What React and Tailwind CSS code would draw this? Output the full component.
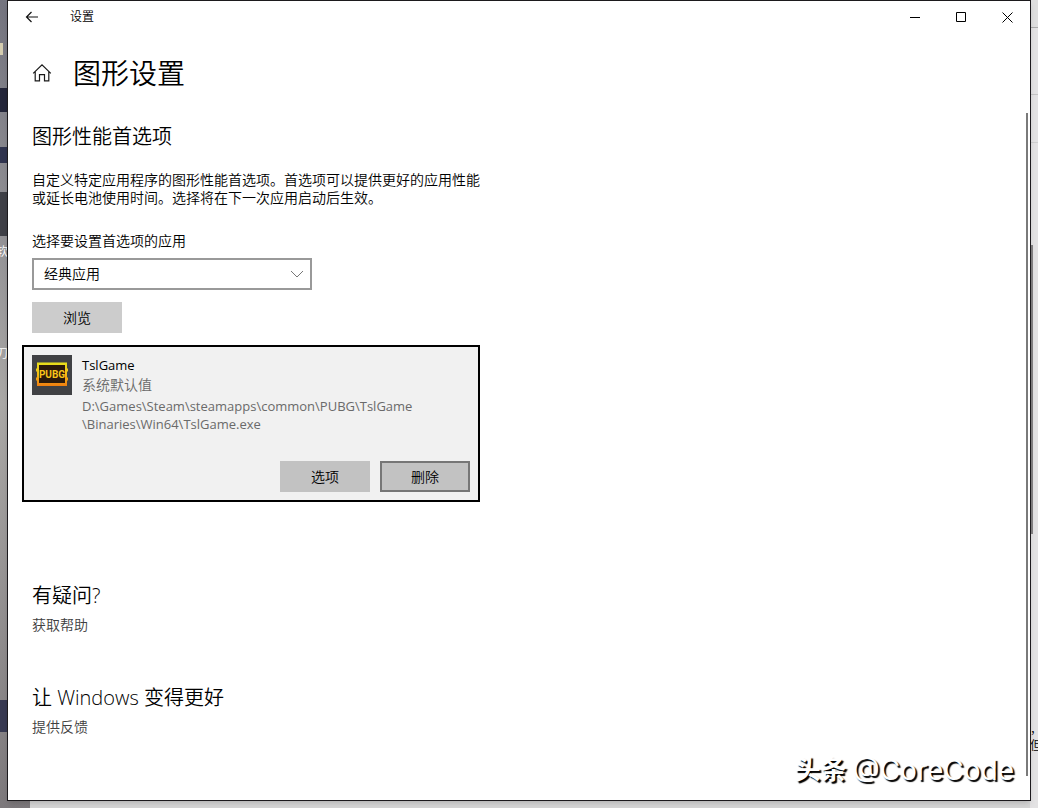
import React, { useState } from 'react';

const BackIcon = () => (
  <svg className="h-3 w-3.5" viewBox="0 0 14 12" fill="none" stroke="#111" strokeWidth="1.2" aria-hidden="true">
    <path d="M13 6H1.5M6.5 1l-5 5 5 5" />
  </svg>
);

const HomeIcon = () => (
  <svg className="h-[18px] w-5" viewBox="0 0 20 18" fill="none" stroke="#1a1a1a" strokeWidth="1.2" aria-hidden="true">
    <path d="M1.2 9.4L10 .9l8.800 8.500M3.200 7.800v9.100h4.300v-6.200h5v6.200h4.300V7.800" />
  </svg>
);

const ChevronIcon = () => (
  <svg className="h-2 w-3.5" viewBox="0 0 14 8" fill="none" stroke="#777" strokeWidth="1" aria-hidden="true">
    <path d="M1 1l6 6 6-6" />
  </svg>
);

const GameLogo = () => (
  <svg className="h-10 w-10 shrink-0" viewBox="0 0 40 40" role="img" aria-label="PUBG">
    <defs>
      <linearGradient id="gold" x1="0" y1="0" x2="0" y2="1">
        <stop offset="0" stopColor="#e8e01c" />
        <stop offset="0.5" stopColor="#f5bd16" />
        <stop offset="1" stopColor="#ef7d10" />
      </linearGradient>
    </defs>
    <rect width="40" height="40" fill="#404144" />
    <path d="M5 7.500h30v6h1v3h-1v6h1v3h-1v5.500H5v-5.500H4v-3h1v-6H4v-3h1z" fill="url(#gold)" />
    <path d="M7 10h26v18H7z" fill="#2b1a0c" />
    <text
      x="20"
      y="22.500"
      textAnchor="middle"
      fill="#f7c51a"
      className="font-['Roboto',sans-serif] text-[10px] font-bold"
    >
      PUBG
    </text>
  </svg>
);

const WindowButton = ({ label, children }) => (
  <button aria-label={label} className="flex h-8 w-[46px] items-center justify-center hover:bg-gray-200">
    <svg className="h-[11px] w-[11px]" viewBox="0 0 11 11" fill="none" stroke="#000" strokeWidth="1" aria-hidden="true">
      {children}
    </svg>
  </button>
);

const TitleBar = () => (
  <header className="flex h-8 items-center">
    <button aria-label="返回" className="flex h-8 w-12 items-center justify-center hover:bg-gray-200">
      <BackIcon />
    </button>
    <span className="ml-3.5 text-xs">设置</span>
    <div className="ml-auto flex">
      <WindowButton label="最小化">
        <path d="M0 5.500h10" />
      </WindowButton>
      <WindowButton label="最大化">
        <path d="M.5.5h9v9h-9z" />
      </WindowButton>
      <WindowButton label="关闭">
        <path d="M.5.5l10 10M10.500.5l-10 10" />
      </WindowButton>
    </div>
  </header>
);

const AppCard = ({ name, preference, path }) => (
  <article className="mt-3 border-2 border-black bg-[#f1f1f1] p-2">
    <div className="flex gap-2.5">
      <GameLogo />
      <div>
        <h3 className="text-[13px] leading-5 font-normal">{name}</h3>
        <p className="leading-5 text-[#6a6a6a]">{preference}</p>
        <p className="mt-0.5 text-[13px] leading-[18px] font-normal text-[#6a6a6a]">
          {path.map((part) => (
            <span key={part} className="block">{part}</span>
          ))}
        </p>
      </div>
    </div>
    <div className="mt-7 flex justify-end gap-2.5">
      <button className="h-[31px] w-[90px] bg-[#c2c2c2]">选项</button>
      <button className="h-[31px] w-[90px] border-2 border-[#767676] bg-[#c2c2c2]">删除</button>
    </div>
  </article>
);

const HelpSection = ({ title, link }) => (
  <section className="px-2.5">
    <h2 className="text-xl leading-6 font-[350]">{title}</h2>
    <a href="#" className="mt-2 block leading-[18px] text-[#404040]">{link}</a>
  </section>
);

// Strips of wallpaper and other windows visible around the settings window
const Desktop = () => (
  <div className="absolute inset-0 flex overflow-hidden bg-[#d6d6d6]" aria-hidden="true">
    <div className="relative w-[30px] bg-linear-to-b from-[#74747f] via-[#aaa8a6] to-[#7d797c]">
      <div className="absolute top-[88px] h-6 w-2 bg-[#24263a]" />
      <div className="absolute top-[147px] h-4 w-2 bg-[#30344f]" />
      <div className="absolute top-[192px] h-11 w-2 bg-[#3f4047]" />
      <div className="absolute top-[700px] h-8 w-2 bg-[#383a52]" />
      <div className="absolute top-[43px] h-3 w-[3px] bg-[#d5cdb0]" />
      <span className="absolute -left-1 top-[244px] text-xs text-white">软</span>
      <span className="absolute -left-1 top-[346px] text-xs text-white">刀</span>
    </div>
    <div className="ml-auto w-2 bg-[#e3e2e3]">
      <div className="h-7 border-b border-[#aaa] bg-[#dedede]" />
      <div className="h-[67px] border-b border-[#c4c4c4]" />
      <div className="h-12 border-b border-[#cfcfcf]" />
      <div className="mt-[102px] h-[289px] w-[3px] bg-[#858384]" />
      <span className="mt-[188px] block text-xs leading-4">，</span>
      <span className="block text-xs leading-4">但</span>
    </div>
  </div>
);

const App = () => {
  const [appType, setAppType] = useState('classic');

  return (
    <div className="relative flex min-h-screen bg-[#d6d6d6] font-['Open_Sans','Noto_Sans_CJK_SC',sans-serif] text-sm font-[350] text-black">
      <Desktop />
      <div className="relative mx-[7px] mb-[7px] flex flex-1 flex-col border border-[#1c1a1d] bg-white shadow-md">
        <TitleBar />
        <div className="flex flex-1">
          <main className="flex-1 pl-3.5">
            <div className="max-w-[458px]">
              <div className="mt-[22px] flex items-center gap-[21px] px-2.5">
                <a href="#" aria-label="主页">
                  <HomeIcon />
                </a>
                <h1 className="text-[28px] leading-9 font-[350]">图形设置</h1>
              </div>

              <section className="mt-[34px]">
                <div className="pl-2.5">
                  <h2 className="text-xl leading-6 font-[350]">图形性能首选项</h2>
                  <p className="mt-[22px] leading-[18px]">
                    自定义特定应用程序的图形性能首选项。首选项可以提供更好的应用性能或延长电池使用时间。选择将在下一次应用启动后生效。
                  </p>
                  <label htmlFor="app-type" className="mt-[25px] block leading-[18px]">选择要设置首选项的应用</label>
                  <div className="mt-2 grid w-[280px] items-center">
                    <select
                      id="app-type"
                      value={appType}
                      onChange={(e) => setAppType(e.target.value)}
                      className="col-start-1 row-start-1 h-8 w-full appearance-none border-2 border-[#999] bg-white px-2.5"
                    >
                      <option value="classic">经典应用</option>
                      <option value="store">Microsoft Store 应用</option>
                    </select>
                    <span className="pointer-events-none col-start-1 row-start-1 mr-2 justify-self-end">
                      <ChevronIcon />
                    </span>
                  </div>
                  <button className="mt-3 block h-[31px] w-[90px] bg-[#ccc]">浏览</button>
                </div>
                <AppCard
                  name="TslGame"
                  preference="系统默认值"
                  path={['D:\\Games\\Steam\\steamapps\\common\\PUBG\\TslGame', '\\Binaries\\Win64\\TslGame.exe']}
                />
              </section>

              <div className="mt-[82px] flex flex-col gap-[52px]">
                <HelpSection title="有疑问?" link="获取帮助" />
                <HelpSection title="让 Windows 变得更好" link="提供反馈" />
              </div>
            </div>
          </main>
          <div className="mt-20 mr-0.5 mb-6 w-0.5 bg-[#7a7a7a]" />
        </div>
        <div className="absolute right-4 bottom-3 flex items-center gap-1.5 font-['Inter','Noto_Sans_CJK_SC',sans-serif] text-[28px] leading-9 font-normal text-white [text-shadow:2px_2px_1px_#000]">
          <span className="text-[26px] font-bold">头条</span>
          <span>@CoreCode</span>
        </div>
      </div>
    </div>
  );
};

export default App;
